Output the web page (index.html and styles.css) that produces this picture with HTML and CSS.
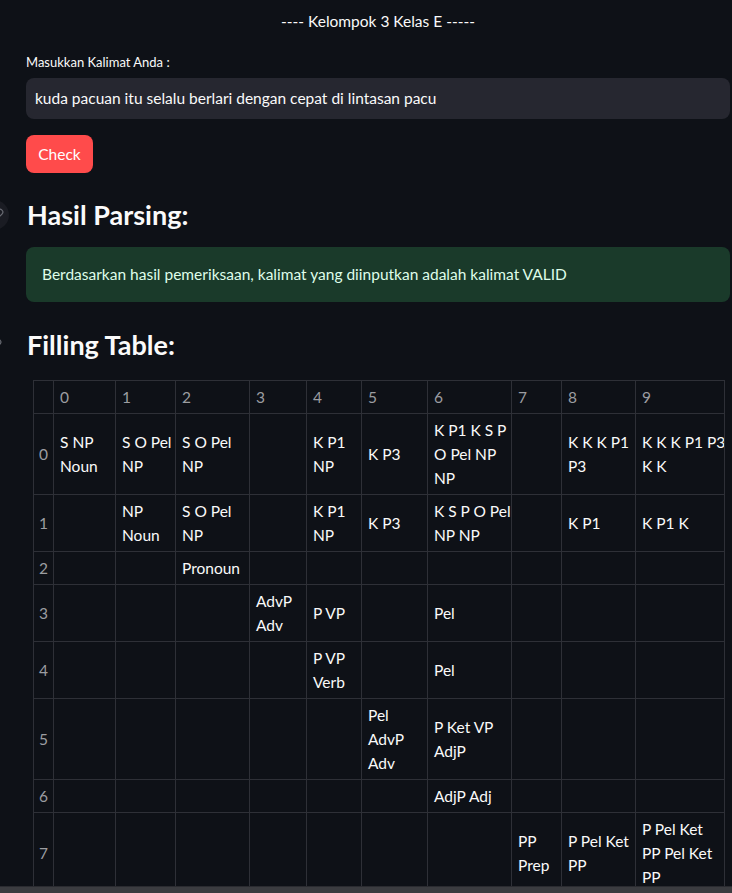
FILE: index.html
```html
<!DOCTYPE html>
<html>
<head>
<meta charset="utf-8">
<link rel="stylesheet" href="styles.css">
</head>
<body>
<div class="main">
  <div class="title">---- Kelompok 3 Kelas E -----</div>
  <div class="label">Masukkan Kalimat Anda :</div>
  <div class="input">kuda pacuan itu selalu berlari dengan cepat di lintasan pacu</div>
  <button class="btn">Check</button>
  <h3 class="heading first">
    <span class="anchor hover"><svg viewBox="0 0 24 24" width="14" height="14" fill="none" stroke="#6b6d75" stroke-width="2" stroke-linecap="round" stroke-linejoin="round"><path d="M10 13a5 5 0 0 0 7.54.54l3-3a5 5 0 0 0-7.07-7.07l-1.72 1.71"/><path d="M14 11a5 5 0 0 0-7.54-.54l-3 3a5 5 0 0 0 7.07 7.07l1.71-1.71"/></svg></span>
    Hasil Parsing:
  </h3>
  <div class="alert">Berdasarkan hasil pemeriksaan, kalimat yang diinputkan adalah kalimat VALID</div>
  <h3 class="heading second">
    <span class="anchor"><svg viewBox="0 0 24 24" width="14" height="14" fill="none" stroke="#6b6d75" stroke-width="2" stroke-linecap="round" stroke-linejoin="round"><path d="M10 13a5 5 0 0 0 7.54.54l3-3a5 5 0 0 0-7.07-7.07l-1.72 1.71"/><path d="M14 11a5 5 0 0 0-7.54-.54l-3 3a5 5 0 0 0 7.07 7.07l1.71-1.71"/></svg></span>
    Filling Table:
  </h3>
  <table class="ftable">
    <thead>
      <tr><th></th><th>0</th><th>1</th><th>2</th><th>3</th><th>4</th><th>5</th><th>6</th><th>7</th><th>8</th><th>9</th></tr>
    </thead>
    <tbody>
      <tr><th>0</th><td>S NP<br>Noun</td><td>S O Pel<br>NP</td><td>S O Pel<br>NP</td><td></td><td>K P1<br>NP</td><td>K P3</td><td>K P1 K S P<br>O Pel NP<br>NP</td><td></td><td>K K K P1<br>P3</td><td>K K K P1 P3<br>K K</td></tr>
      <tr><th>1</th><td></td><td>NP<br>Noun</td><td>S O Pel<br>NP</td><td></td><td>K P1<br>NP</td><td>K P3</td><td>K S P O Pel<br>NP NP</td><td></td><td>K P1</td><td>K P1 K</td></tr>
      <tr><th>2</th><td></td><td></td><td>Pronoun</td><td></td><td></td><td></td><td></td><td></td><td></td><td></td></tr>
      <tr><th>3</th><td></td><td></td><td></td><td>AdvP<br>Adv</td><td>P VP</td><td></td><td>Pel</td><td></td><td></td><td></td></tr>
      <tr><th>4</th><td></td><td></td><td></td><td></td><td>P VP<br>Verb</td><td></td><td>Pel</td><td></td><td></td><td></td></tr>
      <tr><th>5</th><td></td><td></td><td></td><td></td><td></td><td>Pel<br>AdvP<br>Adv</td><td>P Ket VP<br>AdjP</td><td></td><td></td><td></td></tr>
      <tr><th>6</th><td></td><td></td><td></td><td></td><td></td><td></td><td>AdjP Adj</td><td></td><td></td><td></td></tr>
      <tr><th>7</th><td></td><td></td><td></td><td></td><td></td><td></td><td></td><td>PP<br>Prep</td><td>P Pel Ket<br>PP</td><td>P Pel Ket<br>PP Pel Ket<br>PP</td></tr>
    </tbody>
  </table>
</div>
<div class="hscroll"></div>
</body>
</html>
```
FILE: styles.css
```css
html {
  overflow: hidden;
}
body {
  margin: 0;
  background: #0e1117;
  color: #fafafa;
  font-family: Lato, "Noto Sans", sans-serif;
  font-size: 15.5px;
}
.main {
  padding: 0 2px 0 26px;
}
.title {
  text-align: center;
  padding-top: 9px;
  line-height: 24px;
  font-size: 15.5px;
}
.label {
  margin-top: 19px;
  font-size: 13px;
  line-height: 20px;
}
.input {
  margin-top: 6px;
  height: 41px;
  box-sizing: border-box;
  background: #262730;
  border-radius: 8px;
  padding-left: 9px;
  line-height: 41px;
  font-size: 15.5px;
  color: #fafafa;
}
.btn {
  display: block;
  margin-top: 16px;
  height: 38px;
  width: 67px;
  border: none;
  border-radius: 8px;
  background: #ff4b4b;
  color: #fff;
  font-family: inherit;
  font-size: 15.5px;
  padding: 0;
}
.heading {
  position: relative;
  margin: 0;
  font-size: 27px;
  font-weight: 700;
  line-height: 36px;
  padding-left: 1px;
}
.heading.first {
  margin-top: 24px;
}
.heading.second {
  margin-top: 25px;
}
.anchor {
  position: absolute;
  left: -46px;
  top: 3px;
  width: 30px;
  height: 30px;
  border-radius: 50%;
  display: flex;
  align-items: center;
  justify-content: center;
}
.anchor.hover {
  background: #1a1c23;
  left: -47px;
  justify-content: flex-end;
  padding-right: 5px;
  box-sizing: border-box;
}
.alert {
  margin-top: 14px;
  height: 55px;
  box-sizing: border-box;
  background: #1a3a2a;
  border-radius: 8px;
  padding: 0 16px;
  line-height: 55px;
  color: #dffde9;
  font-size: 15.5px;
}
.ftable {
  margin-top: 17px;
  margin-left: 7px;
  border-collapse: collapse;
  table-layout: fixed;
  width: 691px;
  font-size: 15.5px;
  line-height: 24px;
}
.ftable th,
.ftable td {
  border: 1px solid #2e3037;
  padding: 4px 6px;
  white-space: nowrap;
  vertical-align: middle;
  text-align: left;
  overflow: hidden;
}
.ftable th {
  font-weight: 400;
  color: #9c9da1;
}
.ftable tbody th,
.ftable thead th:first-child {
  padding: 4px 5px;
}
.ftable td {
  color: #fafafa;
}
.ftable thead th:nth-child(1) { width: 9px; }
.ftable thead th:nth-child(2) { width: 49px; }
.ftable thead th:nth-child(3) { width: 47px; }
.ftable thead th:nth-child(4) { width: 61px; }
.ftable thead th:nth-child(5) { width: 44px; }
.ftable thead th:nth-child(6) { width: 42px; }
.ftable thead th:nth-child(7) { width: 53px; }
.ftable thead th:nth-child(8) { width: 71px; }
.ftable thead th:nth-child(9) { width: 37px; }
.ftable thead th:nth-child(10) { width: 61px; }
.ftable thead th:nth-child(11) { width: 76px; }
.hscroll {
  position: fixed;
  left: 0;
  right: 0;
  bottom: 0;
  height: 6px;
  background: #3b3c40;
  border-top: 1px solid #2a2b30;
}
```
